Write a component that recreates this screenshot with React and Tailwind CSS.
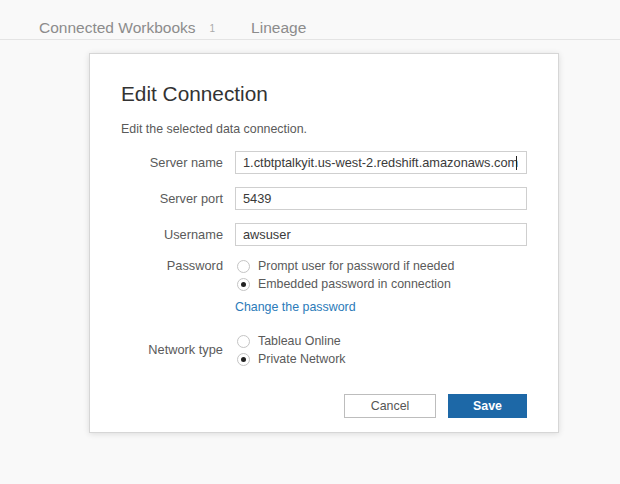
import { useState } from 'react'

function Radio({ checked, label }) {
  return (
    <div className="flex items-center h-[18px]">
      <span className="w-[13px] h-[13px] rounded-full border border-[#c4c4c4] bg-white flex items-center justify-center ml-[2px]">
        {checked && <span className="w-[5px] h-[5px] rounded-full bg-[#222]" />}
      </span>
      <span className="ml-[8px] text-[12.4px] text-[#5a5a5a]">{label}</span>
    </div>
  )
}

function Field({ label, value, caret = false }) {
  return (
    <div className="flex items-center">
      <div className="w-[102px] text-right text-[12.8px] text-[#5a5a5a]">{label}</div>
      <div className="ml-[12px] w-[292px] h-[23px] border border-[#cfcfcf] bg-white flex items-center px-[7px] text-[12.8px] text-[#3a3a3a] whitespace-nowrap overflow-hidden">
        {value}
        {caret && <span className="w-px h-[14px] bg-[#222] ml-[-2px]" />}
      </div>
    </div>
  )
}

export default function App() {
  const [password] = useState('embedded')
  const [network] = useState('private')

  return (
    <div className="w-[620px] h-[484px] bg-[#f9f9f9] font-['Liberation_Sans',Arial,sans-serif] overflow-hidden">
      <div className="h-[40px] border-b border-[#e4e4e4] flex items-end pl-[39px] text-[15.5px] text-[#8c8c8c]">
        <span className="leading-[22px]">Connected Workbooks</span>
        <span className="ml-[14px] text-[10px] text-[#aaa] leading-[20px]">1</span>
        <span className="ml-[36px] leading-[22px]">Lineage</span>
      </div>

      <div className="pl-[89px] pt-[13px]">
        <div className="w-[470px] h-[380px] bg-white border border-[#d6d6d6] shadow-[0_1px_6px_rgba(0,0,0,0.12)] pt-[28px] px-[31px]">
          <h2 className="text-[20.8px] leading-[24px] text-[#333]">Edit Connection</h2>
          <p className="mt-[15px] text-[12.4px] leading-[16px] text-[#5a5a5a]">Edit the selected data connection.</p>

          <div className="mt-[14px] flex flex-col gap-[13px]">
            <Field label="Server name" value="1.ctbtptalkyit.us-west-2.redshift.amazonaws.com" caret />
            <Field label="Server port" value="5439" />
            <Field label="Username" value="awsuser" />
          </div>

          <div className="mt-[11px] flex">
            <div className="w-[102px] text-right text-[12.8px] leading-[18px] text-[#5a5a5a]">Password</div>
            <div className="ml-[12px]">
              <Radio checked={password === 'prompt'} label="Prompt user for password if needed" />
              <Radio checked={password === 'embedded'} label="Embedded password in connection" />
              <div className="mt-[6px] text-[12.4px] leading-[16px] text-[#2b7bb9]">Change the password</div>
            </div>
          </div>

          <div className="mt-[17px] flex items-center">
            <div className="w-[102px] text-right text-[12.8px] text-[#5a5a5a]">Network type</div>
            <div className="ml-[12px]">
              <Radio checked={network === 'online'} label="Tableau Online" />
              <Radio checked={network === 'private'} label="Private Network" />
            </div>
          </div>

          <div className="mt-[26px] flex justify-end gap-[12px]">
            <button
              type="button"
              className="w-[92px] h-[24px] border border-[#bdbdbd] bg-white text-[12.4px] text-[#555]"
            >
              Cancel
            </button>
            <button
              type="button"
              className="w-[79px] h-[24px] bg-[#1d68a7] text-[12.4px] font-bold text-white"
            >
              Save
            </button>
          </div>
        </div>
      </div>
    </div>
  )
}
